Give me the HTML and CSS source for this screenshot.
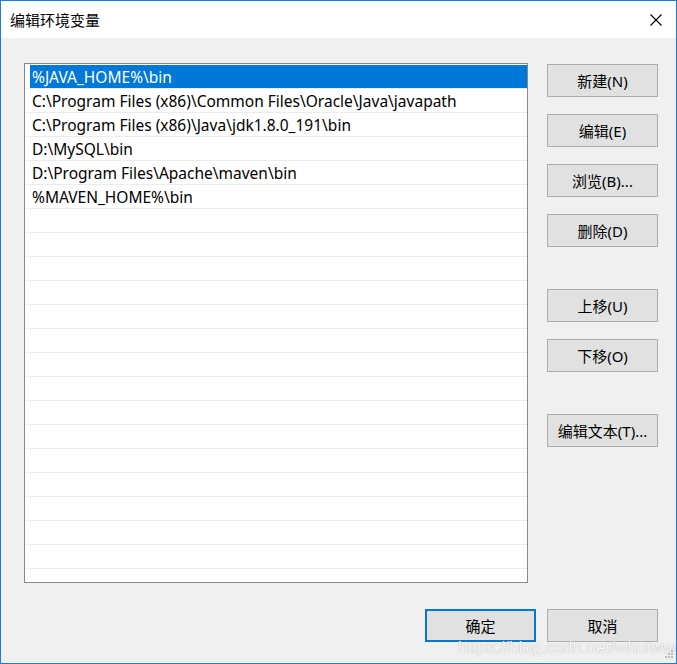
FILE: index.html
```html
<!DOCTYPE html>
<html lang="zh-CN">
  <head>
    <meta charset="UTF-8" />
    <meta name="viewport" content="width=device-width, initial-scale=1.0" />
    <title>编辑环境变量</title>
    <link rel="stylesheet" href="styles.css">
  </head>
  <body>
    <div class="window">
      <div class="titlebar">
        <span class="title">编辑环境变量</span>
        <div class="close">
          <svg width="12" height="12" viewBox="0 0 12 12">
            <path d="M0.5 0.5 L11.5 11.5 M11.5 0.5 L0.5 11.5" stroke="#000" stroke-width="1.1" fill="none" />
          </svg>
        </div>
      </div>

      <div class="content">
        <div class="main">
          <div class="listbox">
            <div class="row selected"><div class="cell">%JAVA_HOME%\bin</div></div>
            <div class="row"><div class="cell">C:\Program Files (x86)\Common Files\Oracle\Java\javapath</div></div>
            <div class="row"><div class="cell">C:\Program Files (x86)\Java\jdk1.8.0_191\bin</div></div>
            <div class="row"><div class="cell">D:\MySQL\bin</div></div>
            <div class="row"><div class="cell">D:\Program Files\Apache\maven\bin</div></div>
            <div class="row"><div class="cell">%MAVEN_HOME%\bin</div></div>
            <div class="row"><div class="cell"></div></div>
            <div class="row"><div class="cell"></div></div>
            <div class="row"><div class="cell"></div></div>
            <div class="row"><div class="cell"></div></div>
            <div class="row"><div class="cell"></div></div>
            <div class="row"><div class="cell"></div></div>
            <div class="row"><div class="cell"></div></div>
            <div class="row"><div class="cell"></div></div>
            <div class="row"><div class="cell"></div></div>
            <div class="row"><div class="cell"></div></div>
            <div class="row"><div class="cell"></div></div>
            <div class="row"><div class="cell"></div></div>
            <div class="row"><div class="cell"></div></div>
            <div class="row"><div class="cell"></div></div>
            <div class="row"><div class="cell"></div></div>
            <div class="row"><div class="cell"></div></div>
          </div>

          <div class="side">
            <button class="btn">新建(N)</button>
            <button class="btn">编辑(E)</button>
            <button class="btn">浏览(B)...</button>
            <button class="btn">删除(D)</button>
            <button class="btn group">上移(U)</button>
            <button class="btn">下移(O)</button>
            <button class="btn group">编辑文本(T)...</button>
          </div>
        </div>

        <div class="footer">
          <button class="btn default">确定</button>
          <button class="btn">取消</button>
        </div>
      </div>

      <div class="watermark">https://blog.csdn.net/whutwwg</div>

      <svg class="grip" width="8" height="8" viewBox="0 0 8 8">
        <rect x="6" y="0" width="2" height="2" fill="#bcbcbc" />
        <rect x="3" y="3" width="2" height="2" fill="#bcbcbc" />
        <rect x="6" y="3" width="2" height="2" fill="#bcbcbc" />
        <rect x="0" y="6" width="2" height="2" fill="#bcbcbc" />
        <rect x="3" y="6" width="2" height="2" fill="#bcbcbc" />
        <rect x="6" y="6" width="2" height="2" fill="#bcbcbc" />
      </svg>
    </div>
  </body>
</html>
```

FILE: styles.css
```css
* {
  box-sizing: border-box;
  margin: 0;
  padding: 0;
}

body {
  font-family: "Noto Sans", "Noto Sans CJK SC", sans-serif;
  font-size: 15px;
  background-color: #f0f0f0;
}

.window {
  position: relative;
  width: 677px;
  height: 664px;
  border: 1px solid #1a7dd7;
  background-color: #f0f0f0;
  overflow: hidden;
}

.titlebar {
  display: flex;
  align-items: center;
  justify-content: space-between;
  height: 37px;
  background-color: #fff;
  padding-left: 9px;
}

.title {
  font-family: "Noto Sans CJK SC", sans-serif;
  font-size: 15px;
  color: #000;
}

.close {
  width: 40px;
  height: 37px;
  display: flex;
  align-items: center;
  justify-content: center;
}

.content {
  padding: 25px 18px 0 23px;
}

.main {
  display: flex;
}

.listbox {
  width: 504px;
  height: 520px;
  border: 1px solid #828790;
  background-color: #fff;
  padding-top: 1px;
  overflow: hidden;
}

.row {
  margin-left: 1px;
  height: 24px;
  border-bottom: 1px solid #ececec;
}

.cell {
  height: 23px;
  line-height: 24px;
  margin-left: 4px;
  padding-left: 2px;
  font-size: 15.5px;
  color: #000;
  white-space: nowrap;
}

.row.selected .cell {
  background-color: #0078d7;
  color: #fff;
}

.side {
  display: flex;
  flex-direction: column;
  margin-left: 19px;
  padding-top: 1px;
  gap: 17px;
}

.btn {
  width: 111px;
  height: 33px;
  background-color: #e1e1e1;
  border: 1px solid #adadad;
  font-family: "Noto Sans", "Noto Sans CJK SC", sans-serif;
  font-size: 15px;
  color: #000;
  text-align: center;
}

.btn.group {
  margin-top: 25px;
}

.btn.default {
  border: 2px solid #0078d7;
}

.footer {
  display: flex;
  justify-content: flex-end;
  gap: 11px;
  margin-top: 26px;
}

.watermark {
  position: absolute;
  left: 457px;
  top: 638px;
  font-family: "Liberation Sans", Arial, sans-serif;
  font-size: 17px;
  line-height: 18px;
  color: rgba(255, 255, 255, 0.92);
  text-shadow: 0 0 1px rgba(90, 90, 90, 0.55);
  white-space: nowrap;
}

.grip {
  position: absolute;
  right: 3px;
  bottom: 5px;
}
```
